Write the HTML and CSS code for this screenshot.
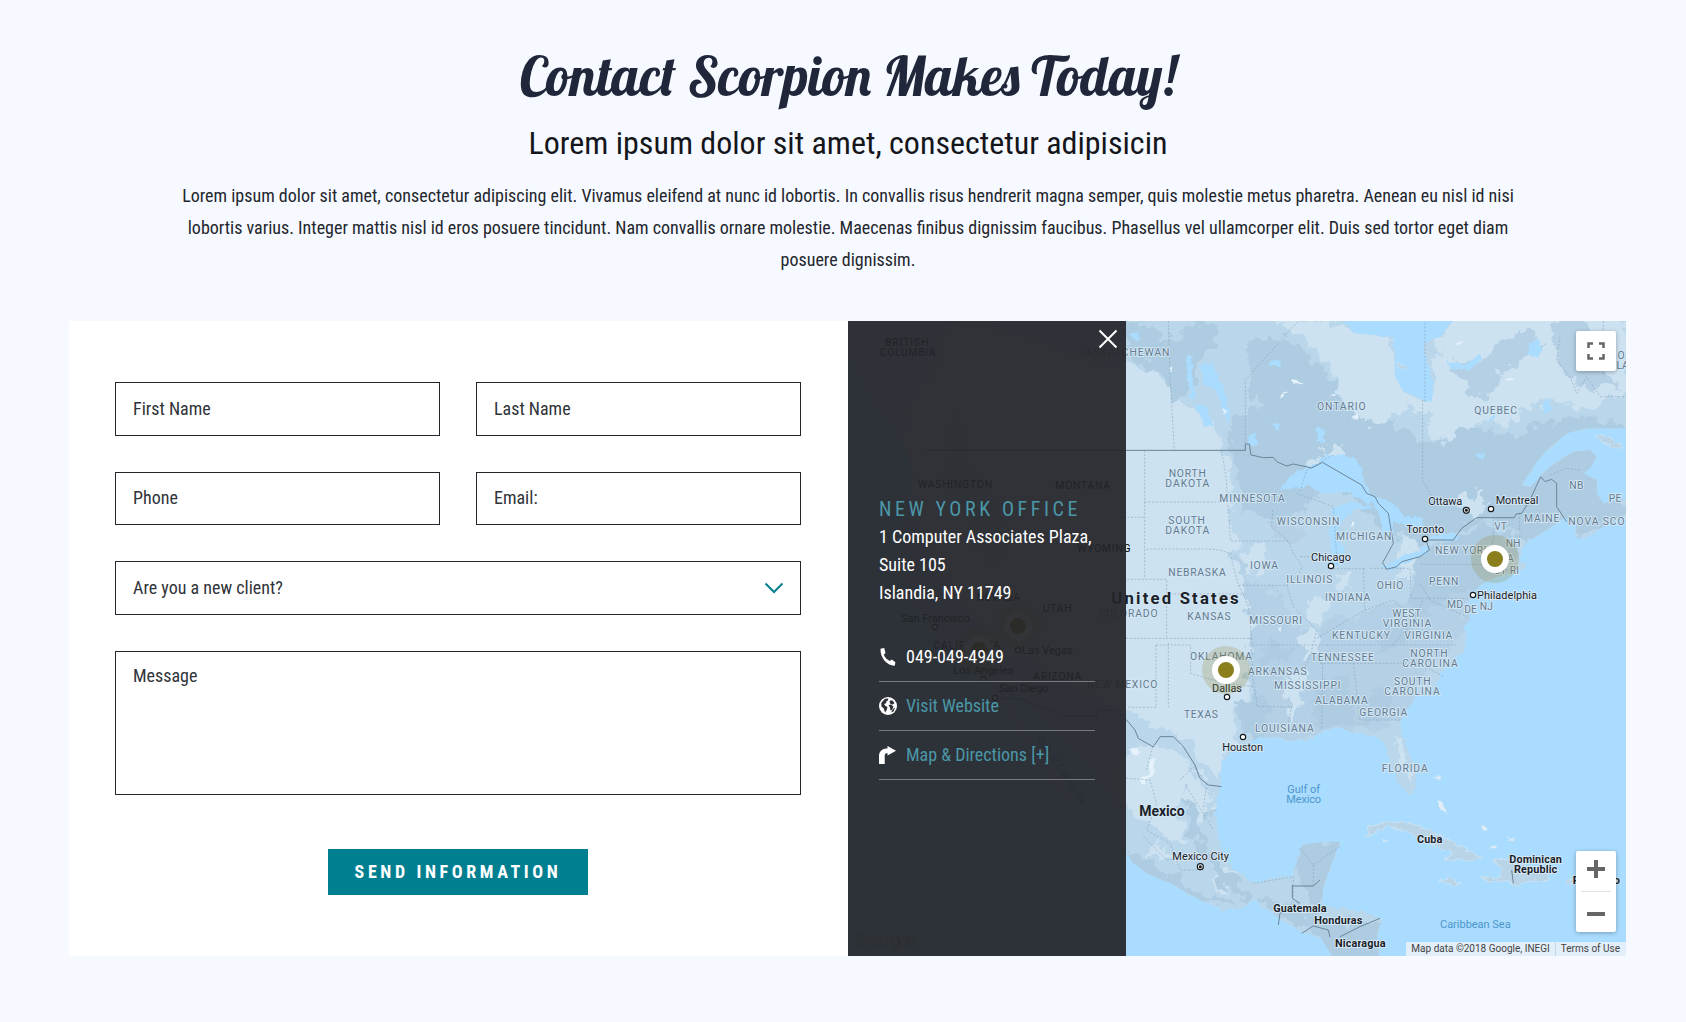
FILE: index.html
```html
<!DOCTYPE html>
<html lang="en">
<head>
<meta charset="utf-8">
<title>Contact Scorpion Makes Today!</title>
<link rel="stylesheet" href="styles.css">
</head>
<body>
<main class="page">
  <header class="intro">
    <h1>Contact Scorpion Makes Today!</h1>
    <h2>Lorem ipsum dolor sit amet, consectetur adipisicin</h2>
    <p>Lorem ipsum dolor sit amet, consectetur adipiscing elit. Vivamus eleifend at nunc id lobortis. In convallis risus hendrerit magna semper, quis molestie metus pharetra. Aenean eu nisl id nisi<br>lobortis varius. Integer mattis nisl id eros posuere tincidunt. Nam convallis ornare molestie. Maecenas finibus dignissim faucibus. Phasellus vel ullamcorper elit. Duis sed tortor eget diam<br>posuere dignissim.</p>
  </header>
  <section class="contact">
    <form class="form">
      <div class="field">First Name</div>
      <div class="field">Last Name</div>
      <div class="field">Phone</div>
      <div class="field">Email:</div>
      <div class="field wide select">Are you a new client?
        <svg width="20" height="12" viewBox="0 0 20 12"><path d="M1.500 1.500 10 10l8.500-8.500" fill="none" stroke="#007f91" stroke-width="2"/></svg>
      </div>
      <div class="field wide message">Message</div>
      <button class="send wide" type="button">SEND INFORMATION</button>
    </form>
    <div class="map">
      <svg class="canvas" viewBox="848 321 778 635" width="778" height="635">
        <defs>
          <filter id="rough" x="-5%" y="-5%" width="110%" height="110%"><feTurbulence type="fractalNoise" baseFrequency=".025" numOctaves="4" seed="4"/><feDisplacementMap in="SourceGraphic" scale="75" xChannelSelector="R" yChannelSelector="G"/></filter>
          <filter id="coast" x="-5%" y="-5%" width="110%" height="110%"><feTurbulence type="fractalNoise" baseFrequency=".05" numOctaves="3" seed="9"/><feDisplacementMap in="SourceGraphic" scale="20" xChannelSelector="R" yChannelSelector="G"/></filter>
          <clipPath id="landclip"><path id="land" d="M-900 0H640L700 70 820 80 825 200 850 245 915 275 935 275 942 230 920 150 910 100 960 80 1000 33V0H1560V355H1400L1340 370 1280 420 1240 470 1205 525 1230 532 1290 470 1360 425 1410 420 1430 440 1410 475 1390 490 1430 510 1430 550 1450 580 1540 560V600L1450 650 1390 690 1365 680 1370 650 1335 622 1280 660 1230 690 1205 720 1200 750 1225 770 1180 790 1130 800 1080 825 1060 850 1040 880 1050 930 1030 950 1040 985 1030 1020 980 1070 940 1130 890 1160 850 1210 840 1250 860 1310 890 1380 890 1430 870 1458 840 1430 810 1360 800 1310 770 1280 700 1270 660 1250 610 1260 560 1295 500 1290 420 1280 390 1300 340 1325 305 1350 300 1400 305 1430 290 1460 288 1560 310 1630 340 1680 380 1705 420 1720 470 1700 515 1700 530 1660 545 1605 610 1595 660 1595 635 1660 610 1730 605 1790 700 1800 755 1810 785 1830 770 1880 780 1960H650L600 1880 530 1860 440 1800 400 1770 360 1795 310 1800 250 1775 150 1720 80 1690 40 1660 15 1620 10 1550-20 1500-80 1400-150 1320-230 1240-290 1170-320 1165-270 1270-190 1370-110 1490-110 1530-150 1500-220 1400-280 1330-320 1260-370 1160-430 1090-530 1040-570 950-640 870-680 760-650 640-620 500-640 420-700 340-760 270-800 180-850 120Z"/></clipPath>
        </defs>
        <rect x="848" y="321" width="778" height="635" fill="#a9dcff"/>
        <g transform="translate(1120 310) scale(.333333)">
          <use href="#land" fill="#bad6ea" filter="url(#coast)"/>
          <g clip-path="url(#landclip)">
            <g filter="url(#rough)">
              <path class="lt" d="M-500 0-100 150 60 170 110 180 145 230 190 290 240 310 290 360 320 420 330 560 350 680 370 800 400 960 395 1100 345 1200 330 1330 290 1400 240 1350 180 1280-400 1000-700 500Z"/>
              <path class="lt" d="M430 0 550 90 630 170 660 270 720 330 780 345 850 310 910 290 940 320 920 380 990 400 1030 380 1070 340 1170 350 1230 280 1360 280 1420 300 1520 250V0H1000L960 80 940 220 860 240 800 80Z"/>
              <path class="dk" d="M0 30 70 40 150 90 230 30 300 50 270 130 230 160 210 260 160 280 130 190 90 170 20 130ZM380 90 500 90 590 160 645 230 660 290 750 340 830 350 900 390 960 400 1050 350 1110 360 1170 380 1300 330 1400 320 1518 340V640L1220 700 1120 630 1000 650 900 700 790 660 640 500 560 600 480 630 370 610 350 500 330 400 350 320 420 290 380 220Z"/>
              <path class="soft" d="M340 700 380 760 370 790 410 830 490 850 520 950 600 960 640 920 700 930 800 880 880 880 1000 820 1100 700 1200 700 1150 820 1050 890 1030 970 900 1100 870 1200 790 1260 650 1270 520 1290 400 1280 370 1230 340 1200 400 1170 380 1100 390 960 380 840Z"/>
              <path class="dk" d="M900 720 1100 640 1200 700 1130 800 1010 860 930 900 830 1010 760 1080 700 1110 780 1000 860 900ZM560 1160 620 1110 800 1110 830 1200 720 1250 600 1260ZM350 1180 400 1150 450 1190 440 1270 380 1290ZM400 1010 480 1000 520 1040 440 1060Z"/>
              <path class="md" d="M420 1080 520 1090 530 1200 500 1240 460 1210ZM690 1050 850 1010 910 1020 820 1130 750 1160 730 1240 700 1190Z"/>
              <path class="lt" d="M380 710 430 700 440 740 410 790 375 780ZM500 1130 530 1070 570 1090 530 1200 500 1240ZM640 400 680 430 620 480 560 480ZM820 1260 860 1320 880 1440 840 1370ZM850 690 900 700 870 800 820 820ZM1010 560 1080 550 1110 590 1060 620ZM560 880 600 860 630 900 600 950 560 930ZM650 790 700 785 700 830 660 840ZM540 980 580 960 600 1000 550 1060Z"/>
              <path class="lt" d="M60 1300 170 1320 270 1440 280 1510 250 1560 220 1530 190 1440 170 1500 210 1600 120 1570 30 1500-30 1400ZM300 1660 350 1700 310 1760 270 1700ZM120 1600 180 1650 70 1640Z"/>
              <path class="dk" d="M190 1440 230 1480 240 1560 310 1680 390 1750 390 1780 300 1710 240 1610 210 1560ZM30 1620 100 1670 220 1740 330 1780 340 1800 180 1750 30 1680ZM540 1590 680 1590 600 1800 530 1700ZM420 1750 600 1830 780 1840 790 1970 650 1970 570 1870 450 1800ZM250 1500 280 1500 270 1540Z"/>
              <path class="md" d="M990 160 1080 150 1130 110 1210 60 1280 90 1250 130 1140 190 1120 260 1040 240ZM1300 33H1400V80L1430 140 1490 230 1400 230 1320 180ZM-500 300-430 500-330 700-390 780-520 500ZM440 640 530 640 560 690 510 700 460 680Z"/>
            </g>
            <g class="water" filter="url(#coast)">
              <path d="M240 165 275 155 305 220 330 310 328 355 312 300 290 245 250 220ZM200 135 218 140 215 190 228 270 210 260 200 190ZM220 280 260 290 280 350 255 345ZM480 537 520 490 590 462 620 435 700 440 728 480 735 525 770 560 745 585 690 545 610 550 560 525 540 535ZM590 355 615 355 612 400 590 395ZM640 590 700 575 765 590 700 600 660 640 650 680 672 720 665 770 640 770 628 690ZM750 560 820 580 850 620 900 620 925 660 860 650 820 635 815 680 790 680 780 620ZM780 772 840 745 925 710 920 730 850 765 810 780ZM915 690 940 675 1000 670 1020 678 990 695ZM980 155 1040 165 1080 130 1090 150 1040 180 990 172ZM1225 100 1255 90 1270 120 1250 145 1225 130ZM1265 280 1285 270 1295 300 1275 315ZM450 150 485 155 475 170 448 165ZM1090 340 1135 300 1120 330ZM1060 435 1095 425 1090 455ZM25 75 60 65 50 95ZM445 340 485 345 475 360ZM380 380 405 365 412 400 390 410Z"/>
            </g>
            <path class="snow" filter="url(#coast)" d="M480 255 505 245 485 262ZM510 210 550 220 545 226 520 218ZM625 262 650 246 648 252ZM695 320 712 318 708 328ZM145 170 153 172 150 185ZM310 300 320 302 315 312ZM695 635 706 640 698 655ZM1010 100 1025 95 1018 105ZM1160 210 1182 205 1172 216ZM475 955 490 948 480 965ZM60 1410 85 1395 90 1350 105 1345 100 1390 70 1425ZM30 1320 50 1310 60 1325 40 1332Z"/>
          </g>
          <g fill="#b9d4e6" stroke="#d6e7f2" stroke-width="2" filter="url(#coast)">
            <path d="M735 1580 750 1550 800 1535 870 1540 930 1560 990 1590 1040 1620 1090 1645 1040 1650 970 1648 1000 1630 930 1600 860 1565 800 1550ZM955 1710 985 1704 1022 1720 1000 1726ZM1080 1700 1140 1705 1150 1670 1120 1655 1160 1650 1220 1670 1280 1690 1290 1710 1220 1715 1185 1730 1170 1712 1110 1715ZM1335 1708 1370 1705 1370 1718 1335 1720ZM1425 375 1460 378 1500 400 1510 415 1470 408ZM830 160 860 165 865 175 845 178Z"/>
            <path fill="#e2eff8" d="M950 1470 965 1475 980 1510 965 1505ZM935 1403 965 1398 960 1404ZM1085 1545 1105 1553 1095 1566ZM1165 1580 1188 1588 1180 1590ZM1110 1610 1130 1605 1128 1615ZM785 1588 805 1590 795 1596Z"/>
          </g>
          <g class="state">
            <path d="M145 33 150 200 163 421M376 421V210L535 33M74 421V808M0 622H74M74 576H320M305 421 318 500 332 693H505L520 730 548 770 530 800 500 826H355L330 730 300 720 265 717H74M0 808H140V985M140 852H370L385 890 395 985H0M145 1000V1192M108 1005V1192H20M108 1005H212V1090L260 1105 320 1120 400 1130M395 985 398 1100 412 1190H515L500 1260M355 826 370 852M500 826 520 890 590 960 570 1040 520 1140M398 1005H570L1010 1005M600 1060H820M608 1060 605 1260M700 1060 720 1230H840M730 776 735 900 590 985M640 776H740M540 740H630M458 600 455 650 505 693M530 550 640 590 652 770M750 775H870L874 865H1040M903 763H1090L1120 690V630M900 820 930 870 1040 920M735 900 820 870 850 900 800 960M908 270V510L935 560M1198 610 1200 700M1130 750V780H1180M820 1060 900 1060 970 1100M820 1005 880 930 910 870M915 275V33M1320 80 1310 150 1350 200 1370 250 1400 200 1440 260H1518M1450 33V200M540 545 560 480 640 435M20 1405 90 1410 110 1480 80 1560 150 1600 180 1680 250 1680M180 1410 220 1370 260 1420 250 1500M100 1300 80 1380M200 1430 280 1560M70 1580 140 1650 230 1640M540 1615 580 1665 660 1610M580 1665V1728M400 1720 520 1700 520 1760M1290 495 1340 475 1380 480"/>
          </g>
          <g class="border">
            <path d="M-585 421H376V402H388L393 435 430 443 460 442 470 455 500 468 520 462 575 474 607 457 725 525 740 550 765 560 775 580 805 610 820 700 788 758 800 778 830 770 845 755 900 740 928 720 918 690H1000L1025 655 1070 623H1183L1188 612 1205 610 1230 570 1262 500 1275 515 1295 508 1310 520V590L1340 635M-375 1164-300 1166-170 1219H-70V1201H-10L20 1230 45 1260 55 1285 100 1311 120 1280 160 1280 190 1310 225 1365 240 1405 265 1425 305 1430M517 1725V1765L540 1780M517 1728H580L600 1710M475 1845 480 1810 500 1800M545 1870 580 1848 625 1860 630 1882M660 1880 720 1850 780 1825M1175 1680 1180 1720"/>
          </g>
          <g class="region">
            <text x="12" y="139" textLength="273">SASKATCHEWAN</text><text x="664" y="299" textLength="146">ONTARIO</text><text x="202" y="500" textLength="112">NORTH</text><text x="202" y="530" textLength="132">DAKOTA</text><text x="396" y="575" textLength="196">MINNESOTA</text><text x="200" y="643" textLength="110">SOUTH</text><text x="202" y="673" textLength="132">DAKOTA</text><text x="564" y="646" textLength="188">WISCONSIN</text><text x="731" y="691" textLength="166">MICHIGAN</text><text x="432" y="776" textLength="84">IOWA</text><text x="231" y="797" textLength="172">NEBRASKA</text><text x="568" y="820" textLength="138">ILLINOIS</text><text x="683" y="872" textLength="136">INDIANA</text><text x="267" y="931" textLength="130">KANSAS</text><text x="24" y="922" textLength="177">COLORADO</text><text x="467" y="942" textLength="158">MISSOURI</text><text x="723" y="987" textLength="174">KENTUCKY</text>
            <text x="1127" y="311" textLength="128">QUEBEC</text><text x="1369" y="538" textLength="42">NB</text><text x="1485" y="575" textLength="38">PE</text><text x="1265" y="635" textLength="106">MAINE</text><text x="1457" y="646" textLength="224">NOVA SCOTIA</text><text x="1142" y="661" textLength="38">VT</text><text x="1179" y="710" textLength="44">NH</text><text x="1028" y="733" textLength="166">NEW YORK</text><text x="971" y="826" textLength="88">PENN</text><text x="1158" y="756" textLength="46">MA</text><text x="1140" y="792" textLength="38">CT</text><text x="1183" y="793" textLength="28">RI</text><text x="810" y="838" textLength="80">OHIO</text><text x="1005" y="893" textLength="48">MD</text><text x="1052" y="910" textLength="38">DE</text><text x="1099" y="900" textLength="40">NJ</text><text x="860" y="920" textLength="86">WEST</text><text x="861" y="950" textLength="146">VIRGINIA</text><text x="925" y="987" textLength="144">VIRGINIA</text><text x="1503" y="147">O</text><text x="1508" y="178">LA</text>
            <text x="303" y="1051" textLength="186">OKLAHOMA</text><text x="667" y="1053" textLength="190">TENNESSEE</text><text x="472" y="1094" textLength="176">ARKANSAS</text><text x="562" y="1136" textLength="200">MISSISSIPPI</text><text x="664" y="1182" textLength="158">ALABAMA</text><text x="790" y="1219" textLength="144">GEORGIA</text><text x="243" y="1223" textLength="102">TEXAS</text><text x="493" y="1267" textLength="176">LOUISIANA</text><text x="7" y="1133" textLength="210">NEW MEXICO</text><text x="927" y="1040" textLength="112">NORTH</text><text x="930" y="1070" textLength="166">CAROLINA</text><text x="877" y="1124" textLength="110">SOUTH</text><text x="876" y="1154" textLength="166">CAROLINA</text><text x="854" y="1385" textLength="138">FLORIDA</text>
          </g>
          <g class="region west">
            <text x="-640" y="108" textLength="130">BRITISH</text><text x="-637" y="139" textLength="168">COLUMBIA</text><text x="-495" y="535" textLength="222">WASHINGTON</text><text x="-112" y="537" textLength="164">MONTANA</text><text x="-48" y="727" textLength="160">WYOMING</text><text x="-365" y="873" textLength="130">NEVADA</text><text x="-189" y="905" textLength="86">UTAH</text><text x="-460" y="1018" textLength="200">CALIFORNIA</text><text x="-188" y="1110" textLength="144">ARIZONA</text>
          </g>
          <g class="city">
            <text x="633" y="752" textLength="120">Chicago</text><text x="976" y="584" textLength="102">Ottawa</text><text x="1191" y="581" textLength="128">Montreal</text><text x="916" y="668" textLength="114">Toronto</text><text x="1161" y="866" textLength="180">Philadelphia</text><text x="321" y="1145" textLength="90">Dallas</text><text x="368" y="1322" textLength="122">Houston</text><text x="242" y="1651" textLength="170">Mexico City</text>
          </g>
          <g class="city west">
            <text x="-554" y="935" textLength="206">San Francisco</text><text x="-218" y="1032" textLength="152">Las Vegas</text><text x="-410" y="1092" textLength="180">Los Angeles</text><text x="-289" y="1145" textLength="148">San Diego</text>
          </g>
          <g class="dots"><circle cx="633" cy="768" r="8"/><circle cx="1039" cy="601" r="9"/><circle cx="1113" cy="597" r="8"/><circle cx="915" cy="687" r="8"/><circle cx="1059" cy="855" r="8"/><circle cx="321" cy="1161" r="8"/><circle cx="369" cy="1281" r="8"/><circle cx="241" cy="1670" r="9"/><circle cx="-555" cy="951" r="8"/><circle cx="-306" cy="1020" r="8"/><circle cx="-410" cy="1108" r="8"/><circle cx="-375" cy="1164" r="8"/></g>
          <g fill="#14181d"><circle cx="1039" cy="601" r="4.500"/><circle cx="241" cy="1670" r="4.500"/></g>
          <g class="country">
            <text class="us" x="165" y="881" textLength="382">United States</text><text class="mx" x="126" y="1518" textLength="136">Mexico</text><text x="540" y="1807" textLength="160">Guatemala</text><text x="655" y="1843" textLength="144">Honduras</text><text x="721" y="1912" textLength="152">Nicaragua</text><text x="929" y="1600" textLength="76">Cuba</text><text x="1247" y="1660" textLength="158">Dominican</text><text x="1247" y="1690" textLength="130">Republic</text><text x="1429" y="1722" textLength="142">Puerto Rico</text>
          </g>
          <g class="sea">
            <text x="551" y="1448" textLength="98">Gulf of</text><text x="551" y="1478" textLength="104">Mexico</text><text x="1066" y="1855" textLength="212">Caribbean Sea</text><text transform="translate(-185 1385) rotate(56)" textLength="240">Gulf of California</text>
          </g>
          <text class="google" x="-795" y="1912" textLength="184">Google</text>
          <g fill="#8a7f1c"><g opacity=".2"><circle cx="1125" cy="747" r="72"/><circle cx="318" cy="1080" r="72"/><circle cx="-306" cy="948" r="72"/><circle cx="-423" cy="1020" r="72"/></g>
          <g stroke="#fff" stroke-width="18"><circle cx="1125" cy="747" r="33"/><circle cx="318" cy="1080" r="33"/><circle cx="-306" cy="948" r="33"/><circle cx="-423" cy="1020" r="33"/></g></g>
        </g>
      </svg>
      <aside class="office">
        <svg class="close" width="20" height="20" viewBox="0 0 20 20"><path d="M1.500 1.500 18.500 18.500M18.500 1.500 1.500 18.500" stroke="#fff" stroke-width="2"/></svg>
        <h3>NEW YORK OFFICE</h3>
        <address>1 Computer Associates Plaza,<br>Suite 105<br>Islandia, NY 11749</address>
        <ul>
          <li><svg width="18" height="18" viewBox="0 0 18 18"><path fill="#fff" d="M1.500.800 5.200 0 6.500 5 4.800 6.800C6 9.500 8 11.700 10.800 13l2-1.500 3.600 2.700-.700 3.500C8 18 .900 9.500 1.500.800Z"/></svg><span>049-049-4949</span></li>
          <li><svg width="18" height="18" viewBox="0 0 18 18"><circle cx="9" cy="9" r="9" fill="#fff"/><path fill="#2c2f35" d="M6 1.800 9.500 1.500 8.500 4 7 4.500 7.500 6 5 7 6.500 9 8.500 10 7.500 13.500 6 15.500 4.800 11.500 2.500 9.500 2.200 6ZM11 3.500 13.500 3.500 15.500 6 14 7.500 11.500 7 10.500 5ZM9.500 8 12 7.500 14.500 9.500 13 13 11.500 13.500 11 10.500ZM14 12 16 10.500 14.500 14.500 12 15.500Z"/></svg><a>Visit Website</a></li>
          <li><svg width="18" height="18" viewBox="0 0 18 18"><path fill="#fff" d="M0 18V10C0 5 3.500 2.500 8.500 2.500V0L17 4.800 8.500 9.500V7C6.500 7 5.700 8 5.700 10V18Z"/></svg><a>Map &amp; Directions [+]</a></li>
        </ul>
      </aside>
      <div class="fullscreen"><svg width="18" height="18" viewBox="0 0 18 18"><path d="M1.500 6V1.500H6M12 1.500h4.500V6M16.500 12v4.500H12M6 16.500H1.500V12" fill="none" stroke="#666" stroke-width="2.500"/></svg></div>
      <div class="zoom"><svg width="18" height="18" viewBox="0 0 18 18"><path d="M9 0v18M0 9h18" stroke="#666" stroke-width="4"/></svg><hr><svg width="18" height="18" viewBox="0 0 18 18"><path d="M0 9h18" stroke="#666" stroke-width="4"/></svg></div>
      <div class="credit"><span>Map data ©2018 Google, INEGI</span><span>Terms of Use</span></div>
    </div>
  </section>
</main>
</body>
</html>
```
FILE: styles.css
```css
* { box-sizing: border-box; }
body { margin: 0; background: #f6f9ff; color: #23262d; font: 18px/32px "Roboto Condensed", Roboto, sans-serif; }
.page { height: 1022px; padding: 41px 60px 0 69px; overflow: hidden; }
.intro { height: 280px; margin-right: -1px; text-align: center; }
h1, h2, h3, p, ul, address { margin: 0; padding: 0; font-style: normal; }
h1 { height: 81px; font: 400 54px/71px Lobster, cursive; color: #20273a; white-space: nowrap; }
h2 { font-size: 32px; font-weight: 400; line-height: 42px; color: #14161b; }
p { margin-top: 16px; white-space: nowrap; }
.contact { display: grid; grid-template-columns: 779px 778px; height: 635px; }
.form { display: grid; grid-template-columns: 325px 325px; grid-template-rows: 54px 53px 54px 144px 46px; column-gap: 36px; row-gap: 36px; padding: 61px 0 0 46px; background: #fff; }
.field { border: 1px solid #23262d; padding: 0 17px 1px; display: flex; align-items: center; color: #303339; }
.wide { grid-column: 1 / -1; }
.select { justify-content: space-between; padding-right: 16px; }
.message { align-items: flex-start; padding-top: 8px; }
.send { margin-top: 18px; height: 46px; width: 260px; justify-self: center; border: 0; background: #007f91; color: #fff; font: inherit; font-weight: 700; letter-spacing: 3.6px; padding: 0 0 1px; }
.map { position: relative; overflow: hidden; display: flex; }
.canvas { position: absolute; left: 0; top: 0; font-family: Roboto, sans-serif; }
.lt { fill: #cde2f1; }
.md { fill: #b5d0e4; }
.dk { fill: #adcbe1; }
.soft { fill: #b3d0e6; }
.water { fill: #a9dcff; }
.snow { fill: #e6f2fb; stroke: #e6f2fb; stroke-width: 2px; }
.state { fill: none; stroke: #8ba8bd; stroke-width: 2px; stroke-dasharray: 6 5; }
.border { fill: none; stroke: #6b8598; stroke-width: 3px; stroke-linejoin: round; }
.region, .city, .country, .sea { text-anchor: middle; stroke-linejoin: round; paint-order: stroke; }
.region { font-size: 31px; fill: #637b91; stroke: #d3e6f3; stroke-width: 6px; }
.city { font-size: 33px; fill: #1b2128; stroke: #d3e6f3; stroke-width: 6px; }
.west { fill: #000; stroke: none; }
.dots { fill: #fff; stroke: #14181d; stroke-width: 3.500px; }
.country { font-size: 33px; font-weight: 700; fill: #1b2128; stroke: #d3e6f3; stroke-width: 6px; }
.us { font-size: 50px; }
.mx { font-size: 42px; }
.sea { font-size: 33px; fill: #4f96cb; stroke: none; }
.google { font-size: 60px; fill: #fff; stroke: #777; stroke-width: 2px; }
.office { position: relative; width: 278px; height: 635px; background: rgba(36, 37, 41, .93); padding: 173px 31px 0; color: #fff; }
.close { position: absolute; right: 8px; top: 8px; }
h3 { font-size: 20px; font-weight: 400; line-height: 30px; letter-spacing: 3.600px; color: #4b97a7; white-space: nowrap; }
address { margin-top: -1px; line-height: 28px; white-space: nowrap; }
ul { list-style: none; margin-top: 26px; width: 216px; }
li { height: 49px; display: flex; align-items: center; gap: 9px; border-bottom: 1px solid #787a7e; white-space: nowrap; }
a { color: #4b97a7; }
.fullscreen, .zoom { position: absolute; right: 10px; width: 40px; background: #fff; border-radius: 2px; box-shadow: 0 1px 4px rgba(0, 0, 0, .3); display: flex; align-items: center; }
.fullscreen { top: 10px; height: 40px; justify-content: center; }
.zoom { bottom: 24px; height: 81px; flex-direction: column; justify-content: space-between; padding: 9px 0; }
hr { width: 30px; height: 1px; margin: 0; border: 0; background: #e2e2e2; }
.credit { position: absolute; right: 0; bottom: 0; height: 14px; display: flex; background: rgba(240, 243, 247, .8); font: 10px/14px Roboto, sans-serif; color: #444; }
.credit span { padding: 0 5px; white-space: nowrap; }
.credit span + span { border-left: 1px solid #c2d8e8; padding-right: 6px; }
```
